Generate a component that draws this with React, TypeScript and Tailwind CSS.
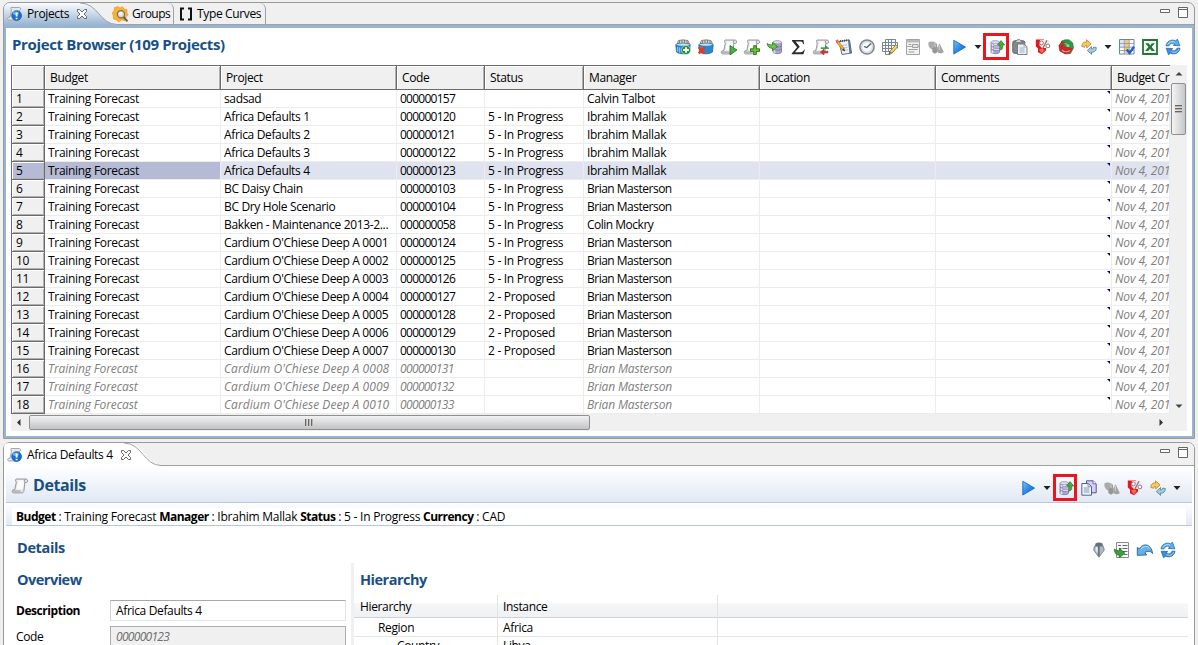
import React from "react";

type IconProps = { children: React.ReactNode };

function Ico({ children }: IconProps) {
  return (
    <svg width="16" height="16" viewBox="0 0 16 16" className="block shrink-0 overflow-visible">
      {children}
    </svg>
  );
}

/* ---------- shared icon parts ---------- */

function ScrollShape() {
  return (
    <g>
      <path d="M4 1h10.200c1.900.2 1.900 3.400.1 3.600h-1.500L12 12.500c-.2 1.700-1 2.400-2.300 2.400H1.500c-1.700-.1-1.700-3.200 0-3.300h1.300L4.300 4.200C3.400 3.200 3.200 1.800 4 1z" fill="#e0e1e2" stroke="#8f9092" strokeWidth=".9" />
      <path d="M5.500 2.200h7c-.4.800-.6 1.300-.4 2.200L10.700 11.500H4.200L5.800 4z" fill="#fbfbfb" />
      <path d="M1.300 12.300h7.200c-.4.800-.1 1.700.5 2.300H1.500c-.9 0-1-1.700-.2-2.300z" fill="#b5b6b8" />
      <path d="M12.800 4.500c-.9-.8-.7-2.400.5-3.200" fill="none" stroke="#808184" strokeWidth=".8" />
    </g>
  );
}

function BasketShape() {
  return (
    <g>
      <path d="M2 5 3.500 1.500 8 .8l5 .7L14.500 5z" fill="#d6d3c8" stroke="#77756c" strokeWidth=".8" />
      <path d="M4.500 1.500v3M7 1v3.500M9.500 1v3.500M12 1.500v3" stroke="#6b6961" strokeWidth=".8" />
      <path d="M.8 5.500C4 3.800 12 3.800 15.200 5.500L14.500 13c-3 2.400-10 2.400-13 0z" fill="#2a86cf" stroke="#1c63a5" strokeWidth=".8" />
      <path d="M.8 5.500C4 4 12 4 15.200 5.500 12 7.300 4 7.300.8 5.500z" fill="#bfe0f7" />
      <path d="M2.600 8v4.500M4.600 8.500v5" stroke="#8cc8f2" strokeWidth="1.200" />
    </g>
  );
}

function PlusBadge() {
  return (
    <path d="M9.700 6.700h2.600v3.100h3.200v2.600h-3.200v3.200H9.700v-3.200H6.500V9.800h3.200z" fill="#6cc33c" stroke="#246b12" strokeWidth=".9" />
  );
}

function Cylinder({ x }: { x: number }) {
  return (
    <g transform={`translate(${x} 0)`}>
      <path d="M0 3.500v9.500c0 2.200 8.500 2.200 8.500 0V3.500z" fill="#a9a3cf" stroke="#7a74a0" strokeWidth=".8" />
      <path d="M1.500 5v9.200" stroke="#e3e0f5" strokeWidth="1.600" />
      <path d="M0 7c1.500 1.500 7 1.500 8.500 0M0 10c1.500 1.500 7 1.500 8.500 0" fill="none" stroke="#6f6999" strokeWidth=".8" />
      <ellipse cx="4.250" cy="3.300" rx="4.250" ry="1.700" fill="#dedbed" stroke="#8982ae" strokeWidth=".7" />
    </g>
  );
}

/* ---------- toolbar icons ---------- */

const BasketAdd = () => (
  <Ico>
    <BasketShape />
    <circle cx="11" cy="11" r="4.600" fill="#2f8f36" stroke="#dff0dc" strokeWidth=".6" />
    <path d="M11 8.200v5.600M8.200 11h5.600" stroke="#fff" strokeWidth="1.800" />
  </Ico>
);
const BasketDel = () => (
  <Ico>
    <BasketShape />
    <path d="M.8 8l5.700 6.500M6.500 8 .8 14.500" stroke="#e8391c" strokeWidth="2.600" />
  </Ico>
);
const ScrollPlay = () => (
  <Ico>
    <ScrollShape />
    <path d="M9 6.500 16 11l-7 4.800z" fill="#4caf46" stroke="#1d6b26" strokeWidth=".8" />
  </Ico>
);
const ScrollAdd = () => (
  <Ico>
    <ScrollShape />
    <PlusBadge />
  </Ico>
);
const DbImport = () => (
  <Ico>
    <Cylinder x={6} />
    <path d="M0 4.500c2.500 1.500 4 1.500 5.500 1.300V3.500L10.500 7.500 5.500 11.500V9.300C3 9.500.8 8 0 4.500z" fill="#67c545" stroke="#237c1c" strokeWidth=".8" />
  </Ico>
);
const Sigma = () => (
  <Ico>
    <path d="M2 1h11.500l.5 4h-.9c-.4-1.900-1.200-2.500-3.300-2.500H5.600l4.200 5.200-4.900 5.600h5.400c2.100 0 3.100-.7 3.800-2.700h.8L13.400 15.300H1.700v-.8l5.400-6.200L2 1.900z" fill="#2a2c2e" />
  </Ico>
);
const ScrollSwap = () => (
  <Ico>
    <ScrollShape />
    <path d="M8 8.800h4.500V6.500L16 9.500h-8z" fill="#2e9e43" stroke="#2e9e43" strokeWidth=".8" />
    <path d="M15 12.200h-4v-2L7.300 13l3.700 3v-2h4z" fill="#d5303a" stroke="#b0202a" strokeWidth=".5" />
  </Ico>
);
const NotePencil = () => (
  <Ico>
    <path d="M3 2.500 13.500 1l2 13L6 15.500z" fill="#eef1f6" stroke="#5e6c84" strokeWidth="1" />
    <path d="M13.500 1l2 13-2 .5-1.500-13z" fill="#5b7195" />
    <path d="M4 2.200l8.500-1.200" stroke="#4a4a4a" strokeWidth="2" strokeDasharray="1 1" />
    <path d="M6 6.500l5-.6M6.500 9l5-.6M7 11.500l5-.6" stroke="#b9c3d2" />
    <path d="M1.200 2.500 7.500 10.500" stroke="#a5681d" strokeWidth="2.800" />
    <path d="M1.800 3.200 7 10" stroke="#f6ad33" strokeWidth="1.900" />
    <path d="M.5 1 2 3.300" stroke="#d96a60" strokeWidth="2.600" />
    <path d="M8.200 9.500l.8 3-3-1.600z" fill="#333" />
  </Ico>
);
const Clock = () => (
  <Ico>
    <circle cx="8" cy="8" r="7.100" fill="#dfe6ee" stroke="#7f858d" strokeWidth="1.500" />
    <circle cx="8" cy="8" r="5.300" fill="#f7fafd" stroke="#b8c0ca" strokeWidth=".6" />
    <path d="M12 4.500 7.800 8.500 5 7.500" fill="none" stroke="#4c5663" strokeWidth="1.100" />
  </Ico>
);
const GridPencil = () => (
  <Ico>
    <path d="M3.500.5h10v3h2v6M3.500.5v3h-3v9H9M.5 6.500h15M.5 9.500h12M3.500 3.500v12h5M6.500.5v12M9.500.5v12M13.500.5v8M.5 3.500h15" fill="none" stroke="#77869a" strokeWidth="1" />
    <path d="M14.500 7 8.500 13.800" stroke="#8e6920" strokeWidth="3.400" />
    <path d="M14.500 7 9 13.200" stroke="#ffd95e" strokeWidth="2" />
    <path d="M7.200 12.400l2 1.900-2.700 1.200z" fill="#555" />
  </Ico>
);
const FormGray = () => (
  <Ico>
    <path d="M1.500.500h13v15h-13z" fill="#f3f3f3" stroke="#a3a3a3" />
    <path d="M1.500 1h13v2.500h-13z" fill="#b9b9b9" />
    <path d="M3.500 5.500h3M3.500 10.500h9M3.500 13h6" stroke="#9d9d9d" />
    <path d="M1 7.500h14" stroke="#aaa" />
    <path d="M7.500 5.500h5.500v3H7.500z" fill="#e5e5e5" stroke="#999" strokeWidth=".9" />
  </Ico>
);
const ShapesGray = () => (
  <Ico>
    <path d="M.4 3.500C1.500 2.300 4.500 2 6.800 3v6.200L4.500 10.500C2 10 0 7.500.4 3.500z" fill="#aaa" />
    <path d="M4.300 9.500 7 7.500l2.300 2.200v3.600L7 14.800 4.300 13z" fill="#969696" />
    <path d="M11.500 4.300 15.800 13c-1.500 1.600-4.500 1.600-6 .5L8.500 10z" fill="#a3a3a3" />
    <path d="M7.200 3.200 9 5v4l-1.500 1z" fill="#9c9c9c" />
    <path d="M11.300 6v5" stroke="#d5d5d5" strokeWidth="1" fill="none" />
  </Ico>
);
const Play = () => (
  <Ico>
    <defs>
      <linearGradient id="play" x1="0" y1="0" x2="1" y2="1">
        <stop offset="0" stopColor="#7fc4fb" />
        <stop offset=".5" stopColor="#2e8be6" />
        <stop offset="1" stopColor="#1060c4" />
      </linearGradient>
    </defs>
    <path d="M2.800 1.300 14.500 8.100 2.800 15z" fill="url(#play)" stroke="#1b66bd" strokeWidth=".9" strokeLinejoin="round" />
  </Ico>
);
const DbUpload = () => (
  <Ico>
    <Cylinder x={2} />
    <path d="M5 5.500h5M5 8h5M5 10.500h5" stroke="#dcdaf0" strokeWidth="1" />
    <path d="M12 1.600 15.700 6h-2v2.800c-.3 1.500-1.500 2.200-3 2.300.8-1 .8-1.500.8-2.300V6H8.600z" fill="#45b234" stroke="#1f7d1b" strokeWidth=".7" />
  </Ico>
);
const Paste = () => (
  <Ico>
    <rect x=".8" y="1.800" width="12" height="12.500" rx="1.800" fill="#85888c" stroke="#5c5f64" />
    <path d="M3.500 3.500V2h1.200L5.500.5h2.400L8.700 2h1v1.500z" fill="#cfd2d6" stroke="#666" strokeWidth=".6" />
    <path d="M5.500 5h6.500l3 2.800v7.700H5.500z" fill="#eceff3" stroke="#6c7480" strokeWidth=".9" />
    <path d="M12 5v3h2.800M7.500 9h5M7.500 11h5M7.500 13h5" fill="none" stroke="#9aa3af" strokeWidth=".8" />
  </Ico>
);
const Percent = () => (
  <Ico>
    <path d="M.8.500H9V8h2v3.500l-4 3.700-4-2V9.500L.8 7.500z" fill="#e5171d" />
    <path d="M4 10.500 7.500 9.300 9.500 11l-2.700 3.500z" fill="#f76a62" />
    <path d="M5 1h9.500v8H7L4.500 6.500z" fill="#f3eaeb" />
    <circle cx="6.400" cy="3.900" r="1.900" fill="#fff" stroke="#94757b" strokeWidth="1" />
    <circle cx="12.900" cy="6.900" r="1.900" fill="#fff" stroke="#94757b" strokeWidth="1" />
    <path d="M12 1.300 7.800 9.300" stroke="#8c6b74" strokeWidth="1.200" />
  </Ico>
);
const RedGreen = () => (
  <Ico>
    <path d="M3.500 2 7 .8h4L14.800 4l.7 5-3 5.500-5 .5L2 12z" fill="#2e9a48" stroke="#24702f" strokeWidth=".6" />
    <path d="M.5 6.500 4 2l3 1-1.500 3.500 9.500 3-3 4.500-5 1L1.500 12z" fill="#cb2724" />
    <path d="M3.500 7c.8-2.200 3.500-2.500 5-.8L7 7.500l4.500 1L12 4.800l-1.300.8C9 3.500 4.500 3.200 3.500 7z" fill="#8fe09a" stroke="#1e6d32" strokeWidth=".5" />
    <path d="M4 11c2 2.300 6 2.300 8 .3" fill="none" stroke="#f59a90" strokeWidth="1.200" />
  </Ico>
);
const SwapArrows = () => (
  <Ico>
    <path d="M.8 7.500C1 3.500 3.500 2.500 5.500 3.200V.8l4.600 4.100-4.400 4V6.500c-1.200-.3-1.800.3-2 1.700z" fill="#f7c95b" stroke="#b5812a" strokeWidth=".8" />
    <path d="M15.300 8.500c0 4-2.500 5-4.700 4.500v2.400L6.300 11.500l4.200-4V9.800c1.300.2 1.900-.4 2.100-1.700z" fill="#a5cbd8" stroke="#4c7f95" strokeWidth=".8" />
  </Ico>
);
const TableCheck = () => (
  <Ico>
    <path d="M.5.500h14.500v14.500H.5z" fill="#fff" stroke="#6485b5" />
    <path d="M1 1h4v3.500H1zM1 5h4v4H1z" fill="#dbe5f5" />
    <path d="M5.500 1h4.500v13.500H5.500z" fill="#fbc86c" />
    <path d="M1 4.500h14M1 8.200h14M1 11.500h14M5.300 1v14M10.300 1v14" stroke="#7895bf" strokeWidth=".8" />
    <path d="M7.800 10.500 10.500 14 15 7.800" fill="none" stroke="#2160c4" strokeWidth="2.300" />
  </Ico>
);
const Excel = () => (
  <Ico>
    <path d="M1 1h14v14H1z" fill="#fff" stroke="#1d7a2e" strokeWidth="1.800" />
    <path d="M3.200 4.200h3.500L8.200 6.400 9.800 4.200h3L9.700 8l3.300 4H9.600L8 9.700 6.300 12h-3.200L6.400 8z" fill="#1d7a2e" />
  </Ico>
);
const Refresh = () => (
  <Ico>
    <path d="M1 6.800C1.600 2.500 6-.2 10.500 1.800L12.500.3l2.300 6.500-6.600-.4 1.900-1.500C7.500 3.500 5.200 4 4 6.800z" fill="#5eb0ed" stroke="#2467ad" strokeWidth=".8" />
    <path d="M15 9.200c-.6 4.300-5 7-9.500 5L3.500 15.700 1.200 9.200l6.600.4-1.900 1.500c2.600 1.400 4.900.9 6.100-1.900z" fill="#3e8fd8" stroke="#2467ad" strokeWidth=".8" />
    <path d="M3 5.500c1.500-3 4.500-3.300 7-2.200M13.500 10.500c-1.500 3-4.500 3.300-7 2.200" fill="none" stroke="#c7e5fb" strokeWidth=".9" />
  </Ico>
);
const CopyPages = () => (
  <Ico>
    <path d="M5.500.8H12l3.200 3v9H5.500z" fill="#d5d1ee" stroke="#5a5199" />
    <path d="M12 .8v3h3" fill="#fff" stroke="#5a5199" strokeWidth=".8" />
    <path d="M.8 3.500h6.400l3.300 3v8.700H.8z" fill="#f0f4fb" stroke="#4e6595" />
    <path d="M7 3.500v3.200h3.300M2.800 8h5.500M2.800 10h5.500M2.800 12h5.500" fill="none" stroke="#6783b5" strokeWidth=".8" />
  </Ico>
);
const PenNib = () => (
  <Ico>
    <path d="M4.500 1.500c2-1.200 5-1.200 7 0l.4 2.500H4z" fill="#66727c" />
    <path d="M3.500 4.200 2.600 8l5.300 7.200L13.300 8l-1-3.800z" fill="#aeb8c1" stroke="#6a7781" strokeWidth=".8" />
    <path d="M7.900 4v10" stroke="#4d5861" strokeWidth="1.200" />
    <path d="M5 5l-.6 3 2.200 3V5z" fill="#e6ebef" />
  </Ico>
);
const ReportArrow = () => (
  <Ico>
    <path d="M2.500.500h12v15h-12z" fill="#fafafa" stroke="#8b8b8b" />
    <path d="M4 3.500h3M8.500 3.500h5M5 6.500h2.500M8.500 6.500h5M8.500 9.500h5M10 12.500h3.500" stroke="#5b6d77" />
    <path d="M.3 7c2 1.800 3.500 1.900 5 1.500V6.300l5.500 4.800-5.500 4.600v-2.500C2.500 13.200.3 11 .3 7z" fill="#3ba03b" stroke="#1f6c22" strokeWidth=".8" />
  </Ico>
);
const Undo = () => (
  <Ico>
    <path d="M.3 13.300V5.500L2.500 6.800C5.500 1 14 1 15.700 11.500 13.500 8.800 10.500 8.800 7.800 10.500L9.500 13z" fill="#63afe6" stroke="#1f5f9c" strokeWidth=".9" />
    <path d="M3.700 7.300c3-3.800 7-3.500 9-.8" fill="none" stroke="#c9e6fa" />
  </Ico>
);
const ScrollIcon = () => (
  <Ico>
    <ScrollShape />
  </Ico>
);
const ProjectIcon = () => (
  <Ico>
    <path d="M4 1.500h8.500c1.500.3 1.500 2.200.3 2.500L11 12c0 1.500-1 2-2 2H2c-1.500 0-2-2.200-.3-2.800H3L4.500 4C4 3 3.500 2.300 4 1.500z" fill="#e4e6ea" stroke="#9ba0a8" strokeWidth=".9" />
    <circle cx="9.600" cy="9.600" r="4.900" fill="#176fd0" stroke="#1d5aa6" strokeWidth=".8" />
    <ellipse cx="8.800" cy="7.300" rx="3" ry="1.800" fill="#69b1f3" />
    <path d="M9.600 6.500v4M9.600 11.800v1.500" stroke="#fff" strokeWidth="1.800" />
  </Ico>
);
const GroupsIcon = () => (
  <Ico>
    <path d="M6 .5 8 2 10.500.5 12 3l3 .5v3L16 9l-2 2-1 3.500-3.500-.5L7 16l-2.500-2-3-1L1.500 10 0 7l2-2 .5-3.500z" fill="#fbb031" stroke="#e89018" strokeWidth=".5" />
    <circle cx="9" cy="8.200" r="3.600" fill="#cfdbe0" stroke="#7c7158" strokeWidth="1.200" />
    <circle cx="8.600" cy="7.700" r="1.900" fill="#f2f6f8" />
    <path d="M11.700 11l3.700 4.300" stroke="#6a5f55" strokeWidth="2" />
  </Ico>
);
const BracketIcon = () => (
  <Ico>
    <path d="M6 2.500H3v11h3M10 2.500h3v11h-3" fill="none" stroke="#111" strokeWidth="2" />
  </Ico>
);
const CloseX = () => (
  <svg width="12" height="12" viewBox="0 0 12 12" className="block shrink-0">
    <path d="M1.500 1.500h2L6 4l2.500-2.500h2v2L8 6l2.500 2.500v2h-2L6 8l-2.500 2.500h-2v-2L4 6 1.500 3.500z" fill="#fff" stroke="#5a5a5a" strokeWidth=".9" />
  </svg>
);
const Caret = () => (
  <svg width="8" height="4" viewBox="0 0 8 4" className="mt-px block shrink-0">
    <path d="M.5 0h7L4 4z" fill="#222" />
  </svg>
);

function Highlighted({ children, narrow = false }: IconProps & { narrow?: boolean }) {
  return (
    <div className="relative">
      {children}
      <div className={`absolute -top-[6px] h-[27px] border-[3px] border-[#ee141e] ${narrow ? "-left-[5px] w-[24px]" : "-left-[6px] w-[26px]"}`} />
    </div>
  );
}

/* Minimise / maximise buttons of a view stack */
function WindowButtons() {
  return (
    <svg width="30" height="12" viewBox="0 0 30 12" className="block">
      <path d="M1.500 2.500h9v3h-9z" fill="#fff" stroke="#666" />
      <path d="M19.500.5h9v10h-9z" fill="#fff" stroke="#666" />
      <path d="M19.500 2.500h9" stroke="#666" />
    </svg>
  );
}

type Row = [string, string, string, string];
const rows: Row[] = [
  ["sadsad", "000000157", "", "Calvin Talbot"],
  ["Africa Defaults 1", "000000120", "5 - In Progress", "Ibrahim Mallak"],
  ["Africa Defaults 2", "000000121", "5 - In Progress", "Ibrahim Mallak"],
  ["Africa Defaults 3", "000000122", "5 - In Progress", "Ibrahim Mallak"],
  ["Africa Defaults 4", "000000123", "5 - In Progress", "Ibrahim Mallak"],
  ["BC Daisy Chain", "000000103", "5 - In Progress", "Brian Masterson"],
  ["BC Dry Hole Scenario", "000000104", "5 - In Progress", "Brian Masterson"],
  ["Bakken - Maintenance 2013-2...", "000000058", "5 - In Progress", "Colin Mockry"],
  ["Cardium O'Chiese Deep A 0001", "000000124", "5 - In Progress", "Brian Masterson"],
  ["Cardium O'Chiese Deep A 0002", "000000125", "5 - In Progress", "Brian Masterson"],
  ["Cardium O'Chiese Deep A 0003", "000000126", "5 - In Progress", "Brian Masterson"],
  ["Cardium O'Chiese Deep A 0004", "000000127", "2 - Proposed", "Brian Masterson"],
  ["Cardium O'Chiese Deep A 0005", "000000128", "2 - Proposed", "Brian Masterson"],
  ["Cardium O'Chiese Deep A 0006", "000000129", "2 - Proposed", "Brian Masterson"],
  ["Cardium O'Chiese Deep A 0007", "000000130", "2 - Proposed", "Brian Masterson"],
  ["Cardium O'Chiese Deep A 0008", "000000131", "", "Brian Masterson"],
  ["Cardium O'Chiese Deep A 0009", "000000132", "", "Brian Masterson"],
  ["Cardium O'Chiese Deep A 0010", "000000133", "", "Brian Masterson"],
];

const GRID = "grid grid-cols-[34px_176px_176px_88px_99px_176px_176px_176px_58px]";

function Cell({ text, className = "" }: { text: string; className?: string }) {
  return (
    <div className={`h-[18px] overflow-hidden border-r border-b border-[#ececec] pl-[3px] leading-[17px] whitespace-pre ${className}`}>
      {text}
    </div>
  );
}

function ProjectTable() {
  const heads = ["Budget", "Project", "Code", "Status", "Manager", "Location", "Comments", "Budget Cr"];
  return (
    <div className="w-[1159px] overflow-hidden">
      <div className={`${GRID} h-[25px] border-t border-b border-[#6b6b6b] bg-[#f0f0f0]`}>
        <div className="border-r border-l border-[#6b6b6b] shadow-[inset_1px_1px_#fff,inset_-1px_0_#b0b0b0]" />
        {heads.map((h, i) => (
          <div key={h} className={`overflow-hidden pl-[5px] leading-[23px] whitespace-nowrap ${i < 7 ? "border-r border-[#6b6b6b] shadow-[inset_1px_1px_#fff,inset_-1px_0_#b0b0b0]" : "shadow-[inset_1px_1px_#fff]"}`}>
            {h}
          </div>
        ))}
      </div>
      {rows.map(([project, code, status, manager], i) => {
        const sel = i === 4;
        const dim = i > 14;
        const tone = dim ? "italic text-[#808080]" : "";
        const bg = sel ? "bg-[#dfe3ef]" : "bg-white";
        return (
          <div key={code} className={`${GRID} h-[18px]`}>
            <div className={`border-r border-b border-l border-[#6b6b6b] pl-1 leading-[17px] shadow-[inset_1px_1px_#fff,inset_-1px_-1px_#b0b0b0] ${sel ? "bg-[#b5bbd4]" : "bg-[#f0f0f0]"}`}>
              {i + 1}
            </div>
            <Cell text="Training Forecast" className={`${tone} ${dim ? "tracking-[-0.1px]" : "tracking-[-0.3px]"} ${sel ? "bg-[#b5bbd4]" : bg}`} />
            <Cell text={project} className={`${tone} ${dim ? "tracking-[0.05px]" : ""} ${bg}`} />
            <Cell text={code} className={`${tone} ${dim ? "tracking-[-0.65px]" : "tracking-[-0.75px]"} ${bg}`} />
            <Cell text={status} className={`tracking-[-0.3px] ${bg}`} />
            <Cell text={manager} className={`${tone} ${dim ? "tracking-[-0.15px]" : i < 5 ? "tracking-[-0.3px]" : "tracking-[-0.5px]"} ${bg}`} />
            <Cell text="" className={bg} />
            <div className={`flex items-start justify-end border-r border-b border-[#ececec] pt-px ${bg}`}>
              <svg width="4" height="4" viewBox="0 0 4 4">
                <path d="M0 0h3v3z" fill="#00007a" />
              </svg>
            </div>
            <Cell text="Nov 4, 2013" className={`tracking-[-0.1px] text-[#808080] italic ${bg}`} />
          </div>
        );
      })}
    </div>
  );
}

function Grip() {
  return (
    <svg width="8" height="7" viewBox="0 0 8 7" className="mr-[2px] block">
      <path d="M.5 0v7M3.500 0v7M6.500 0v7" stroke="#666" />
      <path d="M1.500 0v7M4.500 0v7M7.500 0v7" stroke="#b5b5b5" />
    </svg>
  );
}

function VScroll() {
  return (
    <div className="flex w-[17px] flex-col items-center bg-[#f0f0f0]">
      <svg width="17" height="18" viewBox="0 0 17 18" className="shrink-0">
        <path d="M5.500 10.500 9 7l3.500 3.500z" fill="#444" />
      </svg>
      <div className="flex h-[52px] w-[15px] items-center justify-center rounded-[2px] border border-[#8f8f8f] bg-linear-to-r from-[#f4f4f4] to-[#c6c7c9]">
        <svg width="7" height="8" viewBox="0 0 7 8" className="block">
          <path d="M0 .5h7M0 3.500h7M0 6.500h7" stroke="#666" />
          <path d="M0 1.500h7M0 4.500h7M0 7.500h7" stroke="#b5b5b5" />
        </svg>
      </div>
      <div className="grow" />
      <svg width="17" height="17" viewBox="0 0 17 17" className="shrink-0">
        <path d="M5.500 7.500h7L9 11z" fill="#444" />
      </svg>
    </div>
  );
}

function HScroll() {
  return (
    <div className="flex h-[17px] w-[1176px] items-center bg-[#f0f0f0]">
      <svg width="18" height="15" viewBox="0 0 18 15" className="shrink-0">
        <path d="M9.500 4v7L6 7.500z" fill="#333" />
      </svg>
      <div className="flex h-[15px] w-[561px] items-center justify-center rounded-[2px] border border-[#8f8f8f] bg-linear-to-b from-[#f2f2f2] to-[#c2c3c5]">
        <Grip />
      </div>
      <div className="grow" />
      <svg width="35" height="15" viewBox="0 0 35 15" className="shrink-0">
        <path d="M7.500 4v7L11 7.500z" fill="#333" />
      </svg>
    </div>
  );
}

function ProjectsPanel() {
  return (
    <section className="flex h-[437px] w-[1192px] flex-col overflow-hidden rounded-t-[7px] border border-[#9a9a9a]">
      <div className="relative flex h-[22px] shrink-0">
        <svg width="1190" height="22" viewBox="0 0 1190 22" className="absolute top-0 left-0">
          <defs>
            <linearGradient id="tabBlue" x1="0" y1="0" x2="0" y2="1">
              <stop offset="0" stopColor="#fbfcfe" />
              <stop offset="1" stopColor="#99b4d1" />
            </linearGradient>
          </defs>
          <path d="M0 22V0h78c17 0 18 21.500 35 21.500V22z" fill="url(#tabBlue)" />
          <path d="M76 0c18 0 20 21.500 37 21.500h1077" fill="none" stroke="#a0a0a0" />
        </svg>
        <div className="relative flex h-full w-[105px] items-center gap-[4px] pl-[3px]">
          <ProjectIcon />
          <span className="w-[45px] whitespace-nowrap">Projects</span>
          <CloseX />
        </div>
        <div className="relative flex h-full w-[65px] items-center gap-[4px] rounded-tr-[6px] border-r border-[#a0a0a0] pl-[3px]">
          <GroupsIcon />
          <span className="tracking-[-0.5px] whitespace-nowrap">Groups</span>
        </div>
        <div className="relative flex h-full w-[92px] items-center gap-[3px] rounded-tr-[6px] border-r border-[#a0a0a0] pl-[4px]">
          <BracketIcon />
          <span className="whitespace-nowrap">Type Curves</span>
        </div>
        <div className="relative ml-auto pt-1 pr-[5px]">
          <WindowButtons />
        </div>
      </div>
      <div className="flex grow flex-col border-x-2 border-t-[3px] border-b-2 border-[#99b4d1] bg-white">
        <div className="flex h-[37px] shrink-0 items-center justify-between pr-[11px] pl-[6px]">
          <h1 className="pb-[6px] text-[15px] font-bold tracking-[-0.36px] text-[#1a4f86]">Project Browser (109 Projects)</h1>
          <div className="flex items-center gap-[7px]">
            <BasketAdd />
            <BasketDel />
            <ScrollPlay />
            <ScrollAdd />
            <DbImport />
            <Sigma />
            <ScrollSwap />
            <NotePencil />
            <Clock />
            <GridPencil />
            <FormGray />
            <ShapesGray />
            <Play />
            <Caret />
            <Highlighted>
              <DbUpload />
            </Highlighted>
            <Paste />
            <Percent />
            <RedGreen />
            <SwapArrows />
            <Caret />
            <TableCheck />
            <Excel />
            <Refresh />
          </div>
        </div>
        <div className="flex pl-[5px]">
          <ProjectTable />
          <VScroll />
        </div>
        <div className="pl-[5px]">
          <HScroll />
        </div>
      </div>
    </section>
  );
}

function DetailsPanel() {
  return (
    <section className="mt-[3px] flex h-[210px] w-[1192px] flex-col rounded-t-[7px] border border-[#9a9a9a] bg-white">
      <div className="relative flex h-[23px] shrink-0 rounded-t-[6px] bg-[#f0f0f0]">
        <svg width="1190" height="23" viewBox="0 0 1190 23" className="absolute top-0 left-0">
          <path d="M0 23V5Q0 0 5 0h117c18 0 20 22.500 37 22.500V23z" fill="#fff" />
          <path d="M120 0c18 0 20 22.500 37 22.500h1033" fill="none" stroke="#a0a0a0" />
        </svg>
        <div className="relative flex h-full items-center gap-[4px] pl-[3px]">
          <ProjectIcon />
          <span className="w-[89px] whitespace-nowrap">Africa Defaults 4</span>
          <CloseX />
        </div>
        <div className="relative ml-auto pt-[4px] pr-[5px]">
          <WindowButtons />
        </div>
      </div>
      <div className="mx-[2px] flex h-[37px] shrink-0 items-center justify-between border-b border-[#b4c8de] bg-linear-to-b from-white to-[#e2e9f4] pr-[11px] pl-[6px]">
        <div className="flex items-center gap-[5px] pt-[3px]">
          <ScrollIcon />
          <h2 className="pb-px text-[16px] font-bold tracking-[-0.4px] text-[#1a4f86]">Details</h2>
        </div>
        <div className="flex items-center gap-[7px] pt-[7px]">
          <Play />
          <Caret />
          <Highlighted narrow>
            <DbUpload />
          </Highlighted>
          <CopyPages />
          <ShapesGray />
          <Percent />
          <SwapArrows />
          <Caret />
        </div>
      </div>
      <div className="mx-[2px] flex h-[23px] shrink-0 border-b border-[#b4c8de] bg-linear-to-b from-white to-[#e2e9f4] px-[6px] pt-[5px]">
        <div className="grow bg-white pl-1 leading-[18px] tracking-[-0.24px] whitespace-pre">
          <b className="tracking-[-0.5px]">Budget</b> : Training Forecast <b className="tracking-[-0.5px]">Manager</b> : Ibrahim Mallak <b className="tracking-[-0.5px]">Status</b> : 5 - In Progress <b className="tracking-[-0.5px]">Currency</b> : CAD
        </div>
      </div>
      <div className="flex h-[37px] shrink-0 items-end justify-between pr-[18px] pl-[13px]">
        <h3 className="pb-[5px] text-[14.5px] leading-[20px] font-bold tracking-[-0.35px] text-[#1a4f86]">Details</h3>
        <div className="flex gap-[7px] pb-[5px]">
          <PenNib />
          <ReportArrow />
          <Undo />
          <Refresh />
        </div>
      </div>
      <div className="flex h-[86px] overflow-hidden">
        <div className="w-[347px] shrink-0 pl-[12px]">
          <h3 className="mt-[7px] pl-px text-[14.5px] leading-[20px] font-bold tracking-[-0.5px] text-[#1a4f86]">Overview</h3>
          <div className="mt-[10px] flex items-center">
            <b className="w-[94px] tracking-[-0.45px]">Description</b>
            <div className="h-[21px] w-[236px] border border-[#dfe3ea] border-t-[#a5a8b1] border-l-[#d0d3da] pl-[5px] leading-[19px]">Africa Defaults 4</div>
          </div>
          <div className="mt-[5px] flex items-center">
            <span className="w-[94px]">Code</span>
            <div className="h-[22px] w-[236px] border border-[#abadb3] bg-[#f0f0f0] pl-[5px] leading-[19px] tracking-[-0.7px] text-[#6d6d6d] italic">000000123</div>
          </div>
        </div>
        <div className="w-[3px] shrink-0 bg-[#f0f0f0]" />
        <div className="w-[834px]">
          <h3 className="mt-[7px] pl-[6px] text-[14.5px] leading-[20px] font-bold tracking-[-0.5px] text-[#1a4f86]">Hierarchy</h3>
          <div className="mt-[5px] grid h-[23px] grid-cols-[144px_220px_1fr] border-b border-[#cfd3d7] bg-linear-to-b from-white from-35% via-[#f5f6f7] via-40% to-[#f0f1f3] leading-[24px]">
            <div className="border-r border-[#e2e3e5] pl-[6px]">Hierarchy</div>
            <div className="border-r border-[#e2e3e5] pl-[5px]">Instance</div>
            <div />
          </div>
          <div className="grid h-[19px] grid-cols-[144px_220px_1fr] border-b border-[#e4e4e4] leading-[20px]">
            <div className="border-r border-[#e4e4e4] pl-[24px]">Region</div>
            <div className="border-r border-[#e4e4e4] pl-[5px]">Africa</div>
            <div />
          </div>
          <div className="grid h-[19px] grid-cols-[144px_220px_1fr] leading-[17px]">
            <div className="border-r border-[#e4e4e4] pl-[43px]">Country</div>
            <div className="border-r border-[#e4e4e4] pl-[5px]">Libya</div>
            <div />
          </div>
        </div>
      </div>
    </section>
  );
}

export default function App() {
  return (
    <main className="h-[645px] w-[1198px] overflow-hidden bg-[#f0f0f0] pt-[2px] pl-[3px] font-['Open_Sans','Noto_Sans',sans-serif] text-[12px] leading-[16px] tracking-[-0.35px] text-black">
      <ProjectsPanel />
      <DetailsPanel />
    </main>
  );
}
